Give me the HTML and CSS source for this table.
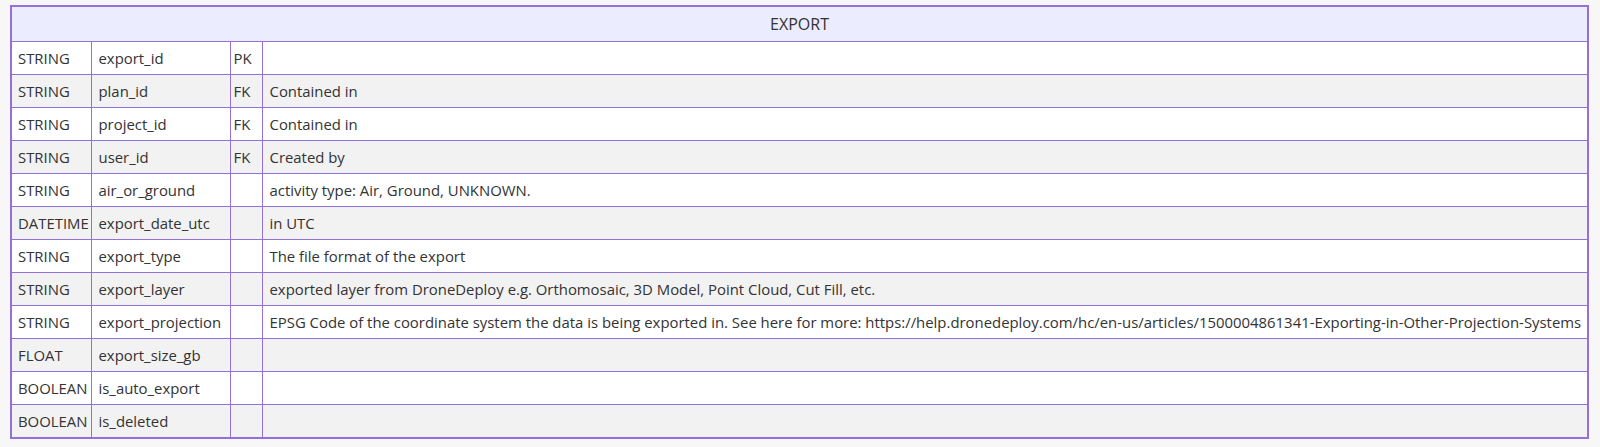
FILE: index.html
```html
<!DOCTYPE html>
<html lang="en">
<head>
    <meta charset="UTF-8">
    <meta name="viewport" content="width=device-width, initial-scale=1.0">
    <title>EXPORT</title>
    <link rel="stylesheet" href="styles.css">
</head>
<body>
    <table class="entity">
        <colgroup>
            <col class="col-type">
            <col class="col-name">
            <col class="col-key">
            <col class="col-comment">
        </colgroup>
        <thead>
            <tr><th colspan="4">EXPORT</th></tr>
        </thead>
        <tbody>
            <tr><td>STRING</td><td>export_id</td><td class="key">PK</td><td></td></tr>
            <tr><td>STRING</td><td>plan_id</td><td class="key">FK</td><td>Contained in</td></tr>
            <tr><td>STRING</td><td>project_id</td><td class="key">FK</td><td>Contained in</td></tr>
            <tr><td>STRING</td><td>user_id</td><td class="key">FK</td><td>Created by</td></tr>
            <tr><td>STRING</td><td>air_or_ground</td><td class="key"></td><td>activity type: Air, Ground, UNKNOWN.</td></tr>
            <tr><td>DATETIME</td><td>export_date_utc</td><td class="key"></td><td>in UTC</td></tr>
            <tr><td>STRING</td><td>export_type</td><td class="key"></td><td>The file format of the export</td></tr>
            <tr><td>STRING</td><td>export_layer</td><td class="key"></td><td>exported layer from DroneDeploy e.g. Orthomosaic, 3D Model, Point Cloud, Cut Fill, etc.</td></tr>
            <tr><td>STRING</td><td>export_projection</td><td class="key"></td><td>EPSG Code of the coordinate system the data is being exported in. See here for more: https://help.dronedeploy.com/hc/en-us/articles/1500004861341-Exporting-in-Other-Projection-Systems</td></tr>
            <tr><td>FLOAT</td><td>export_size_gb</td><td class="key"></td><td></td></tr>
            <tr><td>BOOLEAN</td><td>is_auto_export</td><td class="key"></td><td></td></tr>
            <tr><td>BOOLEAN</td><td>is_deleted</td><td class="key"></td><td></td></tr>
        </tbody>
    </table>
</body>
</html>
```

FILE: styles.css
```css
body {
    margin: 0;
    padding: 5px 11px 10px 10px;
    background: #f7f7f7;
    font-family: "Open Sans", sans-serif;
    color: #333;
}

.entity {
    width: 1579px;
    border-collapse: collapse;
    table-layout: fixed;
    border: 2px solid #9370db;
}

.col-type { width: 80px; }
.col-name { width: 139px; }
.col-key { width: 32px; }

.entity th {
    height: 34px;
    background: #ececff;
    font-weight: normal;
    font-size: 16px;
    border: 1px solid #9370db;
    padding: 0;
}

.entity td {
    height: 32px;
    padding: 0 0 0 7px;
    font-size: 14.9px;
    white-space: nowrap;
    border: 1px solid #9370db;
}

.entity td:first-child {
    padding-left: 6px;
}

.entity td.key {
    padding-left: 3px;
}

.entity tbody tr:nth-child(odd) td {
    background: #fff;
}

.entity tbody tr:nth-child(even) td {
    background: #f2f2f2;
}
```
